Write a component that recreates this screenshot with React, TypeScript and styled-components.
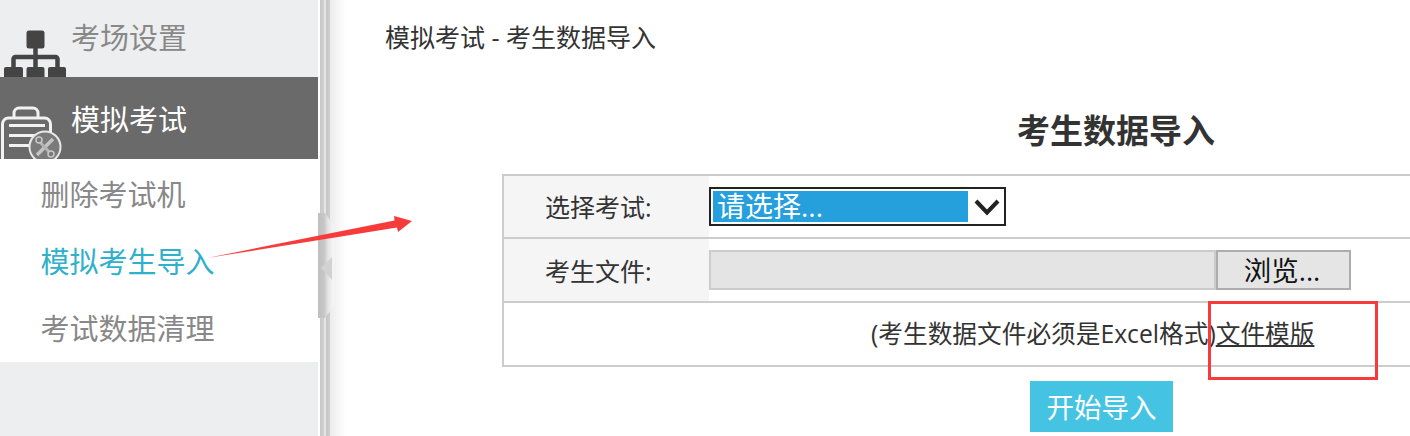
import React from "react";
import styled, { createGlobalStyle } from "styled-components";

const GlobalStyle = createGlobalStyle`
  html, body {
    margin: 0;
    padding: 0;
    background: #fff;
  }
  * {
    box-sizing: border-box;
  }
`;

const FONT = `"Open Sans", "Noto Sans CJK SC", sans-serif`;

const App = () => {
  return (
    <Page>
      <GlobalStyle />
      <Sidebar>
        <MenuItem $height={77}>
          <svg width="71" height="77" viewBox="0 0 71 77">
            <rect x="26.500" y="30.500" width="18" height="18" rx="2.500" fill="#444" />
            <path d="M35.500 48v19M13.500 67v-8a2 2 0 0 1 2-2h40a2 2 0 0 1 2 2v8" stroke="#444" strokeWidth="4.500" fill="none" />
            <rect x="4" y="67" width="19" height="12" rx="2" fill="#444" />
            <rect x="26.500" y="67" width="18" height="12" rx="2" fill="#444" />
            <rect x="48" y="67" width="18" height="12" rx="2" fill="#444" />
          </svg>
          <MenuLabel $top={18}>考场设置</MenuLabel>
        </MenuItem>
        <MenuItem $height={82} $active>
          <svg width="71" height="82" viewBox="0 0 71 82">
            <path d="M14 41v-5a5 5 0 0 1 5-5h14a5 5 0 0 1 5 5v5" stroke="#f2f2f2" strokeWidth="3" fill="none" />
            <rect x="2.500" y="41" width="48" height="50" rx="6" stroke="#f2f2f2" strokeWidth="3" fill="none" />
            <path d="M9 48.500h36M9 58.500h30M9 68.500h24" stroke="#f2f2f2" strokeWidth="3" fill="none" />
            <circle cx="45" cy="70" r="15.500" fill="#7a7a7a" stroke="#e8e8e8" strokeWidth="2" />
            <path d="M37 78l16-16" stroke="#c4c4c4" strokeWidth="3.500" />
            <path d="M38 63l14 15" stroke="#b4b4b4" strokeWidth="3" />
            <circle cx="39" cy="63" r="3" fill="#7a7a7a" stroke="#c8c8c8" strokeWidth="1.500" />
            <circle cx="51" cy="77" r="3" fill="#7a7a7a" stroke="#c8c8c8" strokeWidth="1.500" />
          </svg>
          <MenuLabel $top={23}>模拟考试</MenuLabel>
        </MenuItem>
        <SubMenu>
          <SubItem>删除考试机</SubItem>
          <SubItem $current>模拟考生导入</SubItem>
          <SubItem>考试数据清理</SubItem>
        </SubMenu>
      </Sidebar>

      <Divider>
        <CollapseHandle>
          <HandleArrow />
        </CollapseHandle>
      </Divider>

      <Main>
        <Breadcrumb>模拟考试 - 考生数据导入</Breadcrumb>
        <FormBlock>
          <FormTitle>考生数据导入</FormTitle>
          <FormTable>
            <Row $height={63}>
              <LabelCell $line={62}>选择考试:</LabelCell>
              <ValueCell>
                <SelectBox>
                  <Selection>请选择...</Selection>
                  <svg width="26" height="18" viewBox="0 0 26 18">
                    <path d="M2 3L13 14.500 24 3" stroke="#222" strokeWidth="4" fill="none" />
                  </svg>
                </SelectBox>
              </ValueCell>
            </Row>
            <Row $height={64}>
              <LabelCell $line={64}>考生文件:</LabelCell>
              <ValueCell>
                <FileInput />
                <BrowseButton>浏览...</BrowseButton>
              </ValueCell>
            </Row>
            <NoteRow>
              (考生数据文件必须是Excel格式)<TemplateLink>文件模版</TemplateLink>
            </NoteRow>
          </FormTable>
          <StartButton>开始导入</StartButton>
        </FormBlock>
      </Main>

      {/* 截图上的红色标注 */}
      <ArrowMark width="420" height="270" viewBox="0 0 420 270">
        <polygon points="207,258 394.500,220.500 394,216 412,221 398,232 397,227.500" fill="#f73b3b" />
      </ArrowMark>
      <BoxMark />
    </Page>
  );
};

const Page = styled.div`
  position: relative;
  display: flex;
  width: 1410px;
  height: 436px;
  overflow: hidden;
  font-family: ${FONT};
  background: #fff;
`;

const Sidebar = styled.aside`
  width: 318px;
  flex-shrink: 0;
  display: flex;
  flex-direction: column;
  background: #edeef0;
`;

const MenuItem = styled.div<{ $height: number; $active?: boolean }>`
  display: flex;
  height: ${(p) => p.$height}px;
  overflow: hidden;
  flex-shrink: 0;
  background: ${(p) => (p.$active ? "#6a6a6a" : "transparent")};
  color: ${(p) => (p.$active ? "#fff" : "#888")};

  svg {
    flex-shrink: 0;
    display: block;
  }
`;

const MenuLabel = styled.span<{ $top: number }>`
  margin-top: ${(p) => p.$top}px;
  font-size: 29px;
  line-height: 40px;
  height: 40px;
`;

const SubMenu = styled.div`
  height: 203px;
  padding-top: 2px;
  background: #fff;
  display: flex;
  flex-direction: column;
`;

const SubItem = styled.div<{ $current?: boolean }>`
  height: 67px;
  line-height: 67px;
  padding-left: 40.500px;
  font-size: 29px;
  color: ${(p) => (p.$current ? "#2fb0cb" : "#888")};
`;

const Divider = styled.div`
  position: relative;
  width: 12px;
  flex-shrink: 0;
  background: linear-gradient(
    to right,
    #fff 0,
    #fff 2px,
    #c8c8c8 2px,
    #d0d0d0 6px,
    #e6e6e6 6px,
    #e6e6e6 8px,
    #c4c4c4 8px,
    #cfcfcf 12px
  );
`;

const CollapseHandle = styled.div`
  position: absolute;
  left: 0;
  top: 213px;
  width: 16px;
  height: 105px;
  background: linear-gradient(to right, #bfbfbf 0, #c6c6c6 6px, #e4e4e4 10px, #f7f7f7 16px);
  clip-path: polygon(0 0, 44% 0, 100% 12%, 100% 88%, 44% 100%, 0 100%);
`;

const HandleArrow = styled.div`
  position: absolute;
  left: 3px;
  top: 44px;
  width: 11px;
  height: 23px;
  background: #d2d2d2;
  clip-path: polygon(0 48%, 100% 0, 100% 100%);
`;

const Main = styled.main`
  flex: 1;
  min-width: 0;
  padding-left: 55px;
  background: linear-gradient(to right, #ececec 0, #fff 16px);
  color: #333;
`;

const Breadcrumb = styled.div`
  height: 38px;
  margin-top: 18px;
  line-height: 38px;
  font-size: 25px;
`;

const FormBlock = styled.section`
  width: 1228px;
  margin-left: 117px;
`;

const FormTitle = styled.h2`
  margin: 54px 0 0;
  height: 64px;
  line-height: 42px;
  font-size: 33px;
  font-weight: 700;
  text-align: center;
`;

const FormTable = styled.div`
  border: 2px solid #ccc;
  height: 193px;
`;

const Row = styled.div<{ $height: number }>`
  display: flex;
  height: ${(p) => p.$height}px;
  border-bottom: 2px solid #ccc;
`;

const LabelCell = styled.div<{ $line: number }>`
  width: 205px;
  flex-shrink: 0;
  padding-left: 41px;
  background: #f5f5f5;
  font-size: 25px;
  line-height: ${(p) => p.$line}px;
`;

const ValueCell = styled.div`
  display: flex;
  align-items: center;
  flex: 1;
`;

const SelectBox = styled.div`
  display: flex;
  align-items: center;
  width: 297px;
  height: 39px;
  padding: 2px;
  border: 2px solid #222;
  background: #fff;
`;

const Selection = styled.span`
  width: 255px;
  height: 31px;
  margin-right: 6px;
  padding-left: 4px;
  background: #25a0dc;
  color: #fff;
  font-size: 28px;
  line-height: 31px;
`;

const FileInput = styled.div`
  width: 507px;
  height: 40px;
  background: #e4e4e4;
  border: 2px solid #ccc;
`;

const BrowseButton = styled.button`
  width: 135px;
  height: 40px;
  padding: 2px 3px 0 0;
  background: #e5e5e5;
  border: 2px solid #adadad;
  color: #111;
  font-family: ${FONT};
  font-size: 27.500px;
  line-height: 34px;
`;

const NoteRow = styled.div`
  height: 62px;
  padding-left: 367px;
  line-height: 62px;
  font-size: 24.700px;
  white-space: nowrap;
`;

const TemplateLink = styled.a`
  color: #333;
  text-decoration: underline;
`;

const StartButton = styled.button`
  display: block;
  width: 143px;
  height: 51px;
  margin: 14px 0 0 528px;
  padding: 2px 0 0;
  border: none;
  background: #45c3e2;
  color: #fff;
  font-family: ${FONT};
  font-size: 27.500px;
  line-height: 49px;
`;

const ArrowMark = styled.svg`
  position: absolute;
  left: 0;
  top: 0;
  pointer-events: none;
`;

const BoxMark = styled.div`
  position: absolute;
  left: 1208px;
  top: 301px;
  width: 170px;
  height: 79px;
  border: 3px solid #f73b3b;
  pointer-events: none;
`;

export default App;
